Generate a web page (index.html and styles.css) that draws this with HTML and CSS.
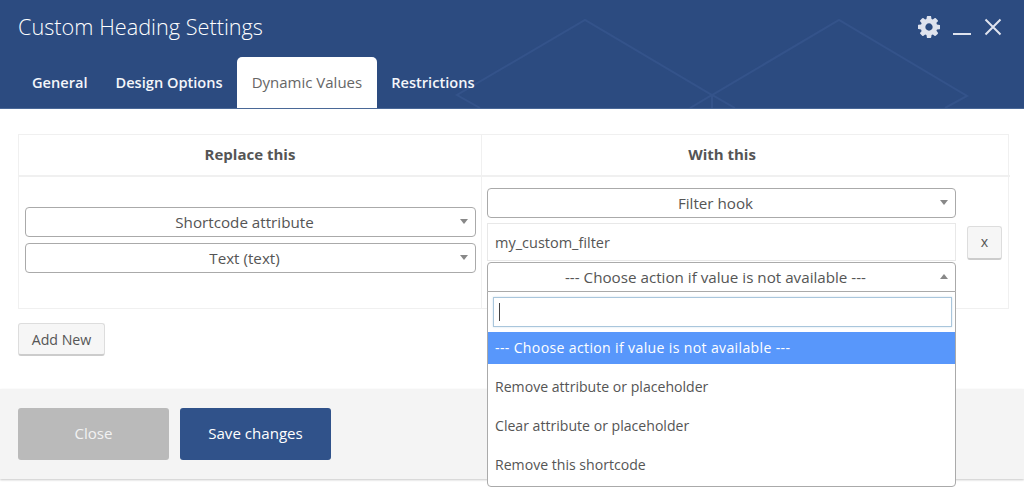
FILE: index.html
```html
<!DOCTYPE html>
<html lang="en">
<head>
    <meta charset="UTF-8">
    <title>Custom Heading Settings</title>
    <link rel="stylesheet" href="styles.css">
</head>
<body>

    <div class="panel-header">
        <svg class="header-pattern" width="1024" height="108" viewBox="0 0 1024 108">
            <path d="M480 108L457 95L585 20L712 95L839 20L967 96L945 108M690 108L712 95L735 108M712 95V108"/>
        </svg>
        <div class="title-row">
            <div class="panel-title">Custom Heading Settings</div>
            <div class="panel-controls">
                <svg class="icon-gear" width="22" height="22" viewBox="0 0 1536 1536">
                    <path d="M1024 768q0-106-75-181t-181-75-181 75-75 181 75 181 181 75 181-75 75-181zm512-109v222q0 12-8 23t-20 13l-185 28q-19 54-39 91 35 50 107 138 10 12 10 25t-9 23q-27 37-99 108t-94 71q-12 0-26-9l-138-108q-44 23-91 38-16 136-29 186-7 28-36 28h-222q-14 0-24.5-8.5t-11.5-21.5l-28-184q-49-16-90-37l-141 107q-10 9-25 9-14 0-25-11-126-114-165-168-7-10-7-23 0-12 8-23 15-21 51-66.5t54-70.5q-27-50-41-99l-183-27q-13-2-21-12.5t-8-23.5v-222q0-12 8-23t19-13l186-28q14-46 39-92-40-57-107-138-10-12-10-24 0-10 9-23 26-36 98.5-107.5t94.5-71.5q13 0 26 10l138 107q44-23 91-38 16-136 29-186 7-28 36-28h222q14 0 24.5 8.5t11.5 21.5l28 184q49 16 90 37l142-107q9-9 24-9 13 0 25 10 129 119 165 170 7 8 7 22 0 12-8 23-15 21-51 66.5t-54 70.5q26 50 41 98l183 28q13 2 21 12.5t8 23.5z"/>
                </svg>
                <div class="icon-minimize"></div>
                <svg class="icon-close" width="18" height="18" viewBox="0 0 18 18">
                    <path d="M1.5 1.5L16.5 16.5M16.5 1.5L1.5 16.5"/>
                </svg>
            </div>
        </div>
        <div class="tabs">
            <div class="tab">General</div>
            <div class="tab">Design Options</div>
            <div class="tab active">Dynamic Values</div>
            <div class="tab">Restrictions</div>
        </div>
    </div>

    <div class="panel-body">
        <div class="values-table">
            <div class="table-head">Replace this</div>
            <div class="table-head head-right">With this</div>
            <div class="table-cell cell-left">
                <div class="select">Shortcode attribute</div>
                <div class="select">Text (text)</div>
            </div>
            <div class="table-cell cell-right">
                <div class="right-fields">
                    <div class="select">Filter hook</div>
                    <div class="text-input">my_custom_filter</div>
                    <div class="select-wrap">
                        <div class="select open">--- Choose action if value is not available ---</div>
                        <div class="dropdown">
                            <div class="search-box"><div class="search-input"><span class="text-cursor"></span></div></div>
                            <div class="option selected">--- Choose action if value is not available ---</div>
                            <div class="option">Remove attribute or placeholder</div>
                            <div class="option">Clear attribute or placeholder</div>
                            <div class="option">Remove this shortcode</div>
                        </div>
                    </div>
                </div>
                <div class="small-button remove-button">x</div>
            </div>
        </div>
        <div class="small-button add-button">Add New</div>
    </div>

    <div class="panel-footer">
        <div class="footer-button close-button">Close</div>
        <div class="footer-button save-button">Save changes</div>
    </div>

</body>
</html>
```
FILE: styles.css
```css
body {
    margin: 0;
    height: 488px;
    overflow: hidden;
    background-color: #fff;
    font-family: "Open Sans", sans-serif;
    color: #555;
}
.panel-header {
    position: relative;
    height: 108px;
    background-color: #2c4b80;
    border-bottom: 1px solid #4a6897;
    overflow: hidden;
}
.header-pattern {
    position: absolute;
    top: 0;
    left: 0;
}
.header-pattern path {
    fill: none;
    stroke: #34538a;
    stroke-width: 2;
}
.title-row {
    position: relative;
    display: flex;
    justify-content: space-between;
    align-items: center;
    height: 57px;
    padding: 0 22px 4px 18px;
    box-sizing: border-box;
}
.panel-title {
    font-size: 21.7px;
    font-weight: 300;
    color: #fff;
}
.panel-controls {
    display: flex;
    align-items: center;
}
.icon-gear {
    fill: #dfe3ee;
}
.icon-minimize {
    width: 18px;
    height: 2px;
    margin: 15px 13px 0 13px;
    background-color: #dfe3ee;
}
.icon-close path {
    stroke: #dfe3ee;
    stroke-width: 2;
    fill: none;
}
.tabs {
    position: relative;
    display: flex;
    height: 51px;
    padding-left: 18px;
}
.tab {
    padding: 15px 14px 0;
    font-size: 14.6px;
    font-weight: 600;
    color: #f4f6fa;
}
.tab.active {
    padding: 15px 15px 0;
    background-color: #fff;
    border-radius: 5px 5px 0 0;
    font-size: 15px;
    font-weight: 400;
    color: #666;
}
.panel-body {
    height: 280px;
    padding: 25px 15px 0 18px;
    box-sizing: border-box;
}
.values-table {
    display: grid;
    grid-template-columns: 463px 528px;
    grid-template-rows: 42px 131px;
    width: 991px;
    border: 1px solid #f0f0f0;
    box-sizing: border-box;
}
.table-head {
    display: flex;
    align-items: center;
    justify-content: center;
    padding-bottom: 2px;
    font-size: 15px;
    font-weight: 700;
    border-bottom: 2px solid #f0f0f0;
}
.table-head.head-right {
    padding-right: 48px;
}
.table-head:first-child, .cell-left {
    border-right: 1px solid #f0f0f0;
}
.cell-left {
    display: flex;
    flex-direction: column;
    gap: 6px;
    padding: 30px 5px 0 6px;
}
.cell-right {
    display: flex;
    align-items: flex-start;
    padding: 11px 6px 0 5px;
}
.right-fields {
    display: flex;
    flex-direction: column;
    width: 469px;
}
.select {
    position: relative;
    height: 30px;
    line-height: 29px;
    padding-right: 12px;
    box-sizing: border-box;
    border: 1px solid #aaa;
    border-radius: 4px;
    background-color: #fff;
    font-size: 15.2px;
    text-align: center;
    color: #555;
}
.select::after {
    content: "";
    position: absolute;
    top: 11px;
    right: 7px;
    border-left: 4px solid transparent;
    border-right: 4px solid transparent;
    border-top: 5px solid #888;
}
.select.open {
    border-radius: 4px 4px 0 0;
}
.select.open::after {
    border-top: none;
    border-bottom: 5px solid #888;
}
.text-input {
    height: 38px;
    margin-top: 5px;
    padding-left: 7px;
    line-height: 38px;
    box-sizing: border-box;
    border: 1px solid #e8e8e8;
    font-size: 14.5px;
    color: #555;
}
.select-wrap {
    position: relative;
    margin-top: 1px;
}
.dropdown {
    position: absolute;
    top: 29px;
    left: 0;
    width: 100%;
    height: 196px;
    box-sizing: border-box;
    border: 1px solid #aaa;
    border-radius: 0 0 4px 4px;
    background-color: #fff;
}
.search-box {
    padding: 5px 3px 5px 5px;
}
.search-input {
    height: 30px;
    padding: 5px 5px;
    box-sizing: border-box;
    border: 1px solid #a9c6dc;
    box-shadow: 0 0 2px #cfe0ec;
}
.text-cursor {
    display: block;
    width: 1px;
    height: 18px;
    background-color: #444;
}
.option {
    height: 39px;
    padding-left: 7px;
    line-height: 45px;
    font-size: 14.1px;
    color: #555;
}
.option.selected {
    height: 32px;
    line-height: 32px;
    letter-spacing: 0.34px;
    background-color: #5897fb;
    color: #fff;
}
.small-button {
    box-sizing: border-box;
    border: 1px solid #ddd;
    border-bottom: 2px solid #ccc;
    border-radius: 3px;
    background-color: #f6f6f6;
    text-align: center;
    font-size: 14.2px;
    color: #555;
}
.remove-button {
    width: 35px;
    height: 34px;
    margin: 38px 0 0 11px;
    line-height: 30px;
}
.add-button {
    width: 87px;
    height: 33px;
    margin-top: 14px;
    line-height: 31px;
}
.panel-footer {
    display: flex;
    gap: 11px;
    height: 90px;
    padding: 19px 18px 0;
    box-sizing: border-box;
    background-color: #f4f4f4;
    box-shadow: 0 1px 2px rgba(0, 0, 0, 0.22);
}
.footer-button {
    width: 151px;
    height: 52px;
    line-height: 51px;
    border-radius: 3px;
    text-align: center;
    font-size: 15.1px;
    color: #fff;
}
.close-button {
    background-color: #bababa;
    color: #f2f2f2;
}
.save-button {
    background-color: #30528a;
}
```
